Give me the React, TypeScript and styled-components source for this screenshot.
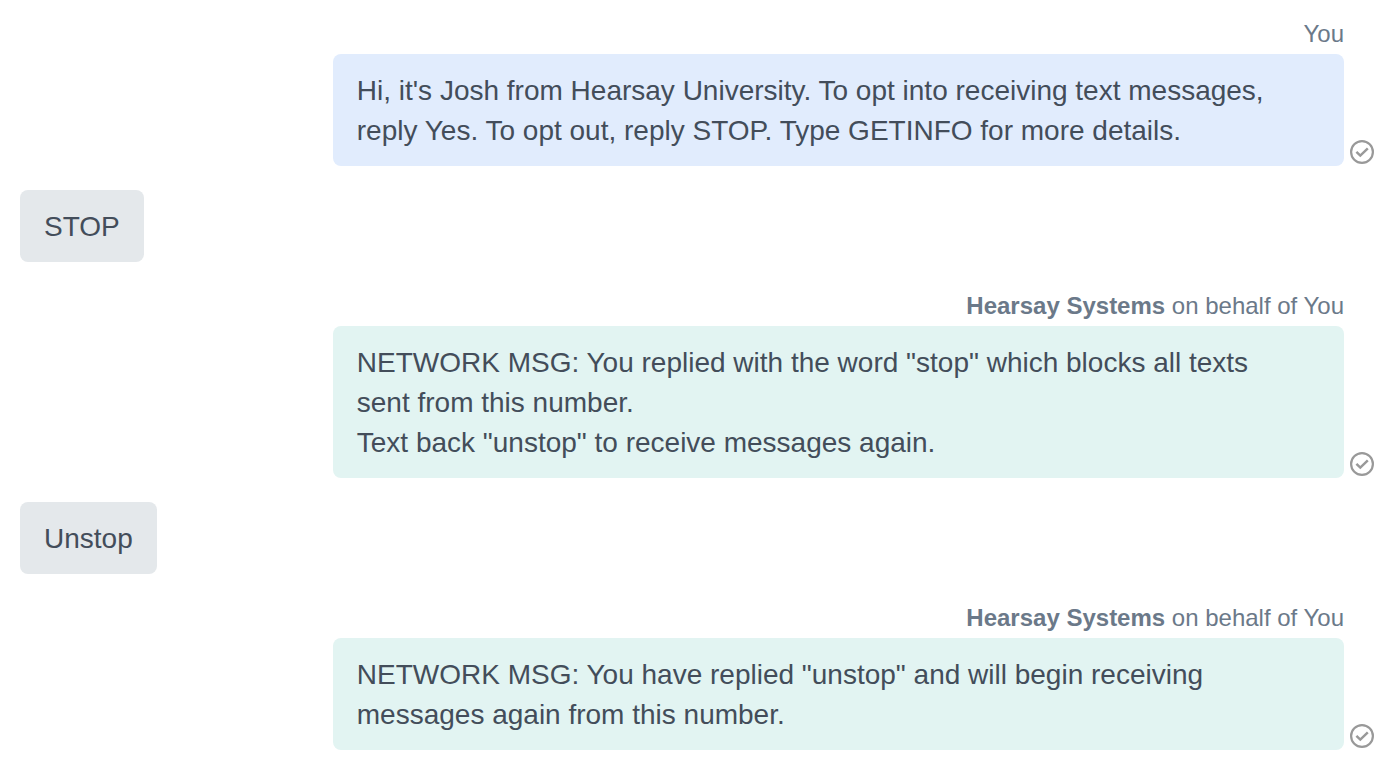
import React from "react";
import styled, { createGlobalStyle } from "styled-components";

const GlobalStyle = createGlobalStyle`
  body {
    margin: 0;
    background: #ffffff;
    font-family: "Liberation Sans", Helvetica, Arial, sans-serif;
  }
`;

type Tone = "blue" | "teal" | "grey";

const tones: Record<Tone, string> = {
  blue: "#e1ecfd",
  teal: "#e2f4f2",
  grey: "#e4e8eb",
};

const Thread = styled.main`
  display: flex;
  flex-direction: column;
  gap: 24px;
  padding: 20px 8px 20px 20px;
`;

const Incoming = styled.article`
  display: flex;
  margin-bottom: 6px;
`;

const Outgoing = styled.article`
  display: flex;
  flex-direction: column;
`;

const Sender = styled.header`
  padding-right: 30px;
  margin-bottom: 6px;
  color: #6b7989;
  font-size: 24px;
  line-height: 28px;
  text-align: right;
`;

const Row = styled.div`
  display: flex;
  align-items: flex-end;
  gap: 6px;
  padding-left: 23.1%;
`;

const Bubble = styled.p<{ $tone: Tone; $grow?: boolean }>`
  flex: ${({ $grow }) => ($grow ? "1" : "none")};
  min-width: 0;
  box-sizing: border-box;
  margin: 0;
  padding: 17px ${({ $grow }) => ($grow ? "40px" : "24px")} 15px 24px;
  border-radius: 8px;
  background: ${({ $tone }) => tones[$tone]};
  color: #434d5a;
  font-size: 28px;
  line-height: 40px;
  white-space: pre-line;
`;

const CheckIcon = styled.svg`
  flex: none;
  display: block;
  width: 24px;
  height: 24px;
  margin-bottom: 2px;
`;

const Delivered = () => (
  <CheckIcon viewBox="0 0 24 24" fill="none" stroke="#999999" role="img" aria-label="Delivered">
    <circle cx="12" cy="12" r="10.9" strokeWidth="2.2" />
    <path d="M6.4 11.8 10.3 15.6 17.8 8.4" strokeWidth="2.5" />
  </CheckIcon>
);

type Message = { from: "contact" | "you" | "system"; text: string };

const messages: Message[] = [
  {
    from: "you",
    text: "Hi, it's Josh from Hearsay University. To opt into receiving text messages, reply Yes. To opt out, reply STOP. Type GETINFO for more details.",
  },
  { from: "contact", text: "STOP" },
  {
    from: "system",
    text: 'NETWORK MSG: You replied with the word "stop" which blocks all texts sent from this number.\nText back "unstop" to receive messages again.',
  },
  { from: "contact", text: "Unstop" },
  {
    from: "system",
    text: 'NETWORK MSG: You have replied "unstop" and will begin receiving messages again from this number.',
  },
];

export default function App() {
  return (
    <>
      <GlobalStyle />
      <Thread>
        {messages.map((message, index) =>
          message.from === "contact" ? (
            <Incoming key={index}>
              <Bubble $tone="grey">{message.text}</Bubble>
            </Incoming>
          ) : (
            <Outgoing key={index}>
              <Sender>
                {message.from === "system" ? (
                  <>
                    <strong>Hearsay Systems</strong> on behalf of You
                  </>
                ) : (
                  "You"
                )}
              </Sender>
              <Row>
                <Bubble $tone={message.from === "you" ? "blue" : "teal"} $grow>
                  {message.text}
                </Bubble>
                <Delivered />
              </Row>
            </Outgoing>
          ),
        )}
      </Thread>
    </>
  );
}
